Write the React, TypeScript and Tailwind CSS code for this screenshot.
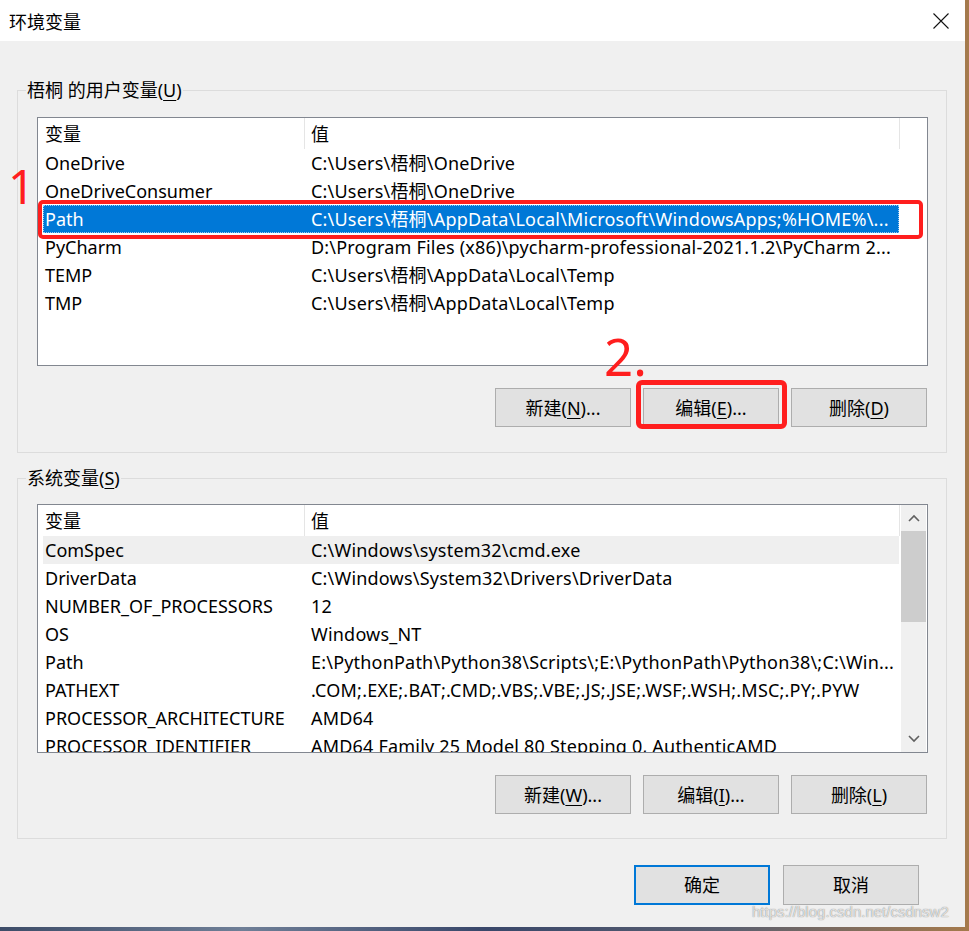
import React from "react";

type Row = { name: string; value: string };

const userVars: Row[] = [
  { name: "OneDrive", value: "C:\\Users\\梧桐\\OneDrive" },
  { name: "OneDriveConsumer", value: "C:\\Users\\梧桐\\OneDrive" },
  { name: "Path", value: "C:\\Users\\梧桐\\AppData\\Local\\Microsoft\\WindowsApps;%HOME%\\..." },
  { name: "PyCharm", value: "D:\\Program Files (x86)\\pycharm-professional-2021.1.2\\PyCharm 2..." },
  { name: "TEMP", value: "C:\\Users\\梧桐\\AppData\\Local\\Temp" },
  { name: "TMP", value: "C:\\Users\\梧桐\\AppData\\Local\\Temp" },
];

const sysVars: Row[] = [
  { name: "ComSpec", value: "C:\\Windows\\system32\\cmd.exe" },
  { name: "DriverData", value: "C:\\Windows\\System32\\Drivers\\DriverData" },
  { name: "NUMBER_OF_PROCESSORS", value: "12" },
  { name: "OS", value: "Windows_NT" },
  { name: "Path", value: "E:\\PythonPath\\Python38\\Scripts\\;E:\\PythonPath\\Python38\\;C:\\Win..." },
  { name: "PATHEXT", value: ".COM;.EXE;.BAT;.CMD;.VBS;.VBE;.JS;.JSE;.WSF;.WSH;.MSC;.PY;.PYW" },
  { name: "PROCESSOR_ARCHITECTURE", value: "AMD64" },
  { name: "PROCESSOR_IDENTIFIER", value: "AMD64 Family 25 Model 80 Stepping 0, AuthenticAMD" },
];

function Header() {
  return (
    <div className="flex h-[31px] shrink-0 items-center bg-white">
      <div className="w-[266px] h-full flex items-center pl-[7px]">变量</div>
      <div className="w-px h-full bg-[#e5e5e5]" />
      <div className="w-[594px] h-full flex items-center pl-[6px]">值</div>
      <div className="w-px h-full bg-[#e5e5e5]" />
    </div>
  );
}

function RowView({ row, selected, hover }: { row: Row; selected?: boolean; hover?: boolean }) {
  const base = "flex h-[28px] w-[856px] shrink-0 items-center";
  const cls = selected
    ? `${base} bg-[#0078d7] text-white outline-1 outline-dotted outline-[#9ccaf0] -outline-offset-1`
    : hover
    ? `${base} bg-[#efefef]`
    : base;
  return (
    <div className={cls}>
      <div className="w-[261px] pl-[2px] whitespace-nowrap overflow-hidden">{row.name}</div>
      <div className="w-[595px] pl-[7px] whitespace-nowrap overflow-hidden tracking-[0.2px]">{row.value}</div>
    </div>
  );
}

function Btn({ children, primary, h = "h-[39px]" }: { children: React.ReactNode; primary?: boolean; h?: string }) {
  return (
    <div
      className={`w-[136px] ${h} flex items-center justify-center bg-[#e1e1e1] ${
        primary ? "border-2 border-[#0078d7]" : "border border-[#adadad]"
      }`}
    >
      {children}
    </div>
  );
}

function Chevron({ up }: { up?: boolean }) {
  return (
    <svg width="12" height="8" viewBox="0 0 12 8">
      <path
        d={up ? "M1 7 L6 2 L11 7" : "M1 1 L6 6 L11 1"}
        fill="none"
        stroke="#606060"
        strokeWidth="1.6"
      />
    </svg>
  );
}

export default function App() {
  return (
    <div className="relative w-[969px] h-[931px] overflow-hidden bg-[linear-gradient(90deg,#3d4c68_0%,#6f7f97_25%,#39476a_50%,#5a5f70_75%,#a57a4c_100%)] font-['Noto_Sans','Noto_Sans_CJK_SC',sans-serif] text-[18px] leading-[24px] text-black">
      <div className="w-[965px] h-[927px] bg-[#f0f0f0] flex flex-col">
        {/* Title bar */}
        <div className="h-[41px] shrink-0 bg-white flex items-center justify-between pl-[9px] pr-[16px]">
          <span className="font-['Noto_Sans_CJK_SC',sans-serif]">环境变量</span>
          <svg width="16" height="16" viewBox="0 0 16 16">
            <path d="M0.5 0.5 L15.5 15.5 M15.5 0.5 L0.5 15.5" stroke="#111" strokeWidth="1.1" />
          </svg>
        </div>

        {/* User variables */}
        <fieldset className="ml-[17px] w-[930px] mt-[37px] border border-[#dcdcdc] p-0">
          <legend className="ml-[8px] px-[1px] leading-[24px]">
            梧桐 的用户变量(<span className="underline underline-offset-[3px]">U</span>)
          </legend>
          <div className="pl-[19px] pr-[18px] pt-[15px] pb-[25px]">
            <div className="w-[891px] h-[249px] border border-[#828790] bg-white flex flex-col overflow-hidden">
              <Header />
              <div className="pl-[5px] flex flex-col">
                {userVars.map((r) => (
                  <RowView key={r.name} row={r} selected={r.name === "Path"} />
                ))}
              </div>
            </div>
            <div className="flex justify-end gap-[12px] mt-[22px] pr-[1px]">
              <Btn>
                新建(<span className="underline underline-offset-[3px]">N</span>)...
              </Btn>
              <Btn>
                编辑(<span className="underline underline-offset-[3px]">E</span>)...
              </Btn>
              <Btn>
                删除(<span className="underline underline-offset-[3px]">D</span>)
              </Btn>
            </div>
          </div>
        </fieldset>

        {/* System variables */}
        <fieldset className="ml-[17px] w-[930px] mt-[13px] border border-[#dcdcdc] p-0">
          <legend className="ml-[8px] px-[1px] leading-[24px]">
            系统变量(<span className="underline underline-offset-[3px]">S</span>)
          </legend>
          <div className="pl-[19px] pr-[18px] pt-[14px] pb-[24px]">
            <div className="w-[891px] h-[249px] border border-[#828790] bg-white flex overflow-hidden">
              <div className="w-[863px] flex flex-col overflow-hidden">
                <Header />
                <div className="pl-[5px] flex flex-col">
                  {sysVars.map((r) => (
                    <RowView key={r.name} row={r} hover={r.name === "ComSpec"} />
                  ))}
                </div>
              </div>
              <div className="w-[25px] h-full bg-[#f0f0f0] flex flex-col">
                <div className="h-[26px] flex items-center justify-center">
                  <Chevron up />
                </div>
                <div className="h-[91px] bg-[#cdcdcd]" />
                <div className="flex-1" />
                <div className="h-[26px] flex items-center justify-center">
                  <Chevron />
                </div>
              </div>
            </div>
            <div className="flex justify-end gap-[12px] mt-[22px] pr-[1px]">
              <Btn>
                新建(<span className="underline underline-offset-[3px]">W</span>)...
              </Btn>
              <Btn>
                编辑(<span className="underline underline-offset-[3px]">I</span>)...
              </Btn>
              <Btn>
                删除(<span className="underline underline-offset-[3px]">L</span>)
              </Btn>
            </div>
          </div>
        </fieldset>

        {/* OK / Cancel */}
        <div className="flex justify-end gap-[13px] mt-[26px] pr-[46px]">
          <Btn primary h="h-[40px]">确定</Btn>
          <Btn h="h-[40px]">取消</Btn>
        </div>
      </div>

      {/* Annotations */}
      <div className="absolute left-[38px] top-[200px] w-[885px] h-[39px] border-[4px] border-[#ff1e1e] rounded-[5px]" />
      <div className="absolute left-[636px] top-[380px] w-[151px] h-[49px] border-[5px] border-[#ff1e1e] rounded-[6px]" />
      <div className="absolute left-[8px] top-[158px] text-[#ff1e1e] text-[47px] leading-[56px] font-['Noto_Sans',sans-serif] font-normal">
        1
      </div>
      <div className="absolute left-[604px] top-[326px] text-[#ff1e1e] text-[51px] leading-[60px] font-['Noto_Sans',sans-serif] font-normal">
        2.
      </div>
      <div className="absolute left-[752px] top-[903px] text-[15px] leading-[18px] text-[#ffffffc0] font-['Liberation_Sans',sans-serif] [text-shadow:0_0_1px_#666]">
        https://blog.csdn.net/csdnsw2
      </div>
    </div>
  );
}
